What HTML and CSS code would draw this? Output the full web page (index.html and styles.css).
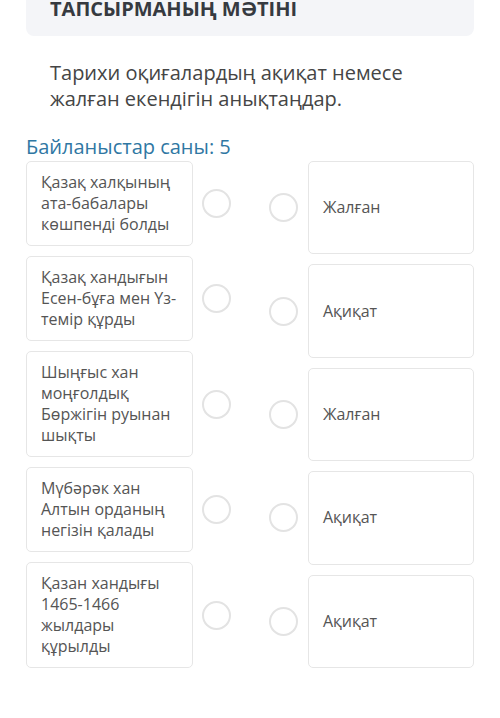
FILE: index.html
```html
<!DOCTYPE html>
<html lang="kk">
<head>
  <meta charset="UTF-8" />
  <meta name="viewport" content="width=device-width, initial-scale=1.0"/>
  <title>Тапсырма</title>
  <link rel="stylesheet" href="styles.css">
</head>
<body>
  <header class="task-head">
    <h1>ТАПСЫРМАНЫҢ МӘТІНІ</h1>
  </header>

  <p class="task-text">Тарихи оқиғалардың ақиқат немесе жалған екендігін анықтаңдар.</p>

  <div class="count">Байланыстар саны: 5</div>

  <div class="match">
    <div class="col left">
      <div class="item">
        <div class="card">Қазақ халқының ата-бабалары көшпенді болды</div>
        <span class="dot"></span>
      </div>
      <div class="item">
        <div class="card">Қазақ хандығын Есен-бұға мен Үз-темір құрды</div>
        <span class="dot"></span>
      </div>
      <div class="item">
        <div class="card">Шыңғыс хан моңғолдық Бөржігін руынан шықты</div>
        <span class="dot"></span>
      </div>
      <div class="item">
        <div class="card">Мүбәрәк хан Алтын орданың негізін қалады</div>
        <span class="dot"></span>
      </div>
      <div class="item">
        <div class="card">Қазан хандығы 1465-1466 жылдары құрылды</div>
        <span class="dot"></span>
      </div>
    </div>

    <div class="col right">
      <div class="item">
        <span class="dot"></span>
        <div class="card">Жалған</div>
      </div>
      <div class="item">
        <span class="dot"></span>
        <div class="card">Ақиқат</div>
      </div>
      <div class="item">
        <span class="dot"></span>
        <div class="card">Жалған</div>
      </div>
      <div class="item">
        <span class="dot"></span>
        <div class="card">Ақиқат</div>
      </div>
      <div class="item">
        <span class="dot"></span>
        <div class="card">Ақиқат</div>
      </div>
    </div>
  </div>
</body>
</html>
```

FILE: styles.css
```css
body {
  font-family: 'Open Sans', 'Noto Sans', sans-serif;
  margin: 0;
  padding: 0 26px;
  background: #fff;
  color: #444;
}
.task-head {
  background: #f4f5f8;
  border-radius: 0 0 8px 8px;
  padding: 0 24px;
  height: 37px;
  margin-top: -1px;
}
.task-head h1 {
  margin: 0;
  font-size: 20px;
  line-height: 20px;
  font-weight: 700;
  color: #363a40;
}
.task-text {
  margin: 24px 0 0 24px;
  font-size: 20px;
  line-height: 26px;
  color: #454545;
}
.count {
  margin-top: 23px;
  font-size: 20px;
  line-height: 24px;
  color: #2f77a3;
}
.match {
  display: flex;
  justify-content: space-between;
  margin-top: 2px;
}
.col {
  display: flex;
  flex-direction: column;
  gap: 10px;
  width: 205px;
}
.item {
  display: flex;
  align-items: center;
  flex: 1;
}
.card {
  border: 1px solid #e6e6e6;
  border-radius: 5px;
  padding: 10px 14px;
  font-size: 16px;
  line-height: 21px;
  color: #555;
  box-sizing: border-box;
  flex-shrink: 0;
}
.left .card {
  width: 167px;
}
.right .card {
  width: 166px;
  align-self: stretch;
  display: flex;
  align-items: center;
}
.dot {
  width: 25px;
  height: 25px;
  border: 2px solid #e3e3e3;
  border-radius: 50%;
  flex-shrink: 0;
}
.left .dot {
  margin-left: 9px;
}
.right .dot {
  margin-right: 10px;
}
```
